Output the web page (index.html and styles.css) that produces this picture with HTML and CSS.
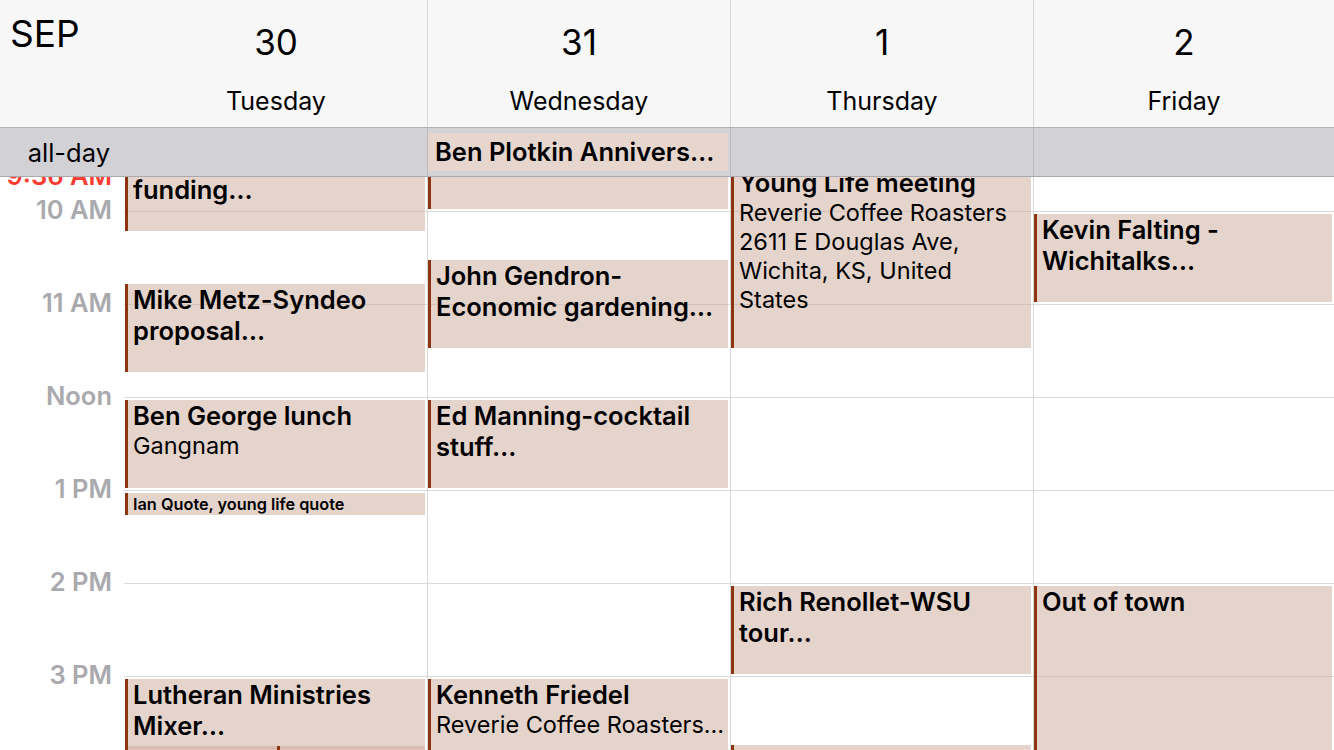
FILE: index.html
```html
<!DOCTYPE html>
<html lang="en">
<head>
  <meta charset="UTF-8">
  <meta name="viewport" content="width=device-width, initial-scale=1.0">
  <title>Calendar - Week</title>
  <link rel="stylesheet" href="styles.css">
</head>
<body>
  <div class="calendar">
    <div class="week-head">
      <div class="month">SEP</div>
      <div class="day-head"><div class="day-num">30</div><div class="day-name">Tuesday</div></div>
      <div class="day-head"><div class="day-num">31</div><div class="day-name">Wednesday</div></div>
      <div class="day-head"><div class="day-num">1</div><div class="day-name">Thursday</div></div>
      <div class="day-head"><div class="day-num">2</div><div class="day-name">Friday</div></div>
    </div>

    <div class="allday-row">
      <div class="allday-label">all-day</div>
      <div class="allday-cell"></div>
      <div class="allday-cell"><div class="allday-event">Ben Plotkin Annivers…</div></div>
      <div class="allday-cell"></div>
      <div class="allday-cell"></div>
    </div>

    <div class="timeline">
      <div class="timeline-inner">
        <div class="hour"><span class="hour-label"></span><span class="hour-line"></span></div>
        <div class="hour"><span class="hour-label">10 AM</span><span class="hour-line"></span></div>
        <div class="hour"><span class="hour-label">11 AM</span><span class="hour-line"></span></div>
        <div class="hour"><span class="hour-label">Noon</span><span class="hour-line"></span></div>
        <div class="hour"><span class="hour-label">1 PM</span><span class="hour-line"></span></div>
        <div class="hour"><span class="hour-label">2 PM</span><span class="hour-line"></span></div>
        <div class="hour"><span class="hour-label">3 PM</span><span class="hour-line"></span></div>
        <div class="hour"><span class="hour-label">4 PM</span><span class="hour-line"></span></div>

        <span class="now-label">9:36 AM</span>

        <div class="days">
          <div class="day-col">
            <div class="event" style="top: 25px; height: 88px;">
              <div class="ev-title">Wichita startup<br>funding…</div>
            </div>
            <div class="event" style="top: 166px; height: 88px;">
              <div class="ev-title">Mike Metz-Syndeo<br>proposal…</div>
            </div>
            <div class="event" style="top: 282px; height: 88px;">
              <div class="ev-title">Ben George lunch</div>
              <div class="ev-sub">Gangnam</div>
            </div>
            <div class="event event-small" style="top: 375px; height: 22px;">
              <div class="ev-title">Ian Quote, young life quote</div>
            </div>
            <div class="event" style="top: 561px; height: 160px;">
              <div class="ev-title">Lutheran Ministries<br>Mixer…</div>
            </div>
            <div class="event event-half" style="top: 628px; height: 90px;"></div>
            <div class="event event-half event-right" style="top: 628px; height: 90px;"></div>
          </div>

          <div class="day-col">
            <div class="event" style="top: 3px; height: 88px;">
              <div class="ev-title">Chamber coffee</div>
            </div>
            <div class="event" style="top: 142px; height: 88px;">
              <div class="ev-title">John Gendron-<br>Economic gardening…</div>
            </div>
            <div class="event" style="top: 282px; height: 88px;">
              <div class="ev-title">Ed Manning-cocktail<br>stuff…</div>
            </div>
            <div class="event" style="top: 561px; height: 160px;">
              <div class="ev-title">Kenneth Friedel</div>
              <div class="ev-sub">Reverie Coffee Roasters…</div>
            </div>
          </div>

          <div class="day-col">
            <div class="event" style="top: 49px; height: 181px;">
              <div class="ev-title">Young Life meeting</div>
              <div class="ev-sub">Reverie Coffee Roasters<br>2611 E Douglas Ave,<br>Wichita, KS, United<br>States</div>
            </div>
            <div class="event" style="top: 468px; height: 88px;">
              <div class="ev-title">Rich Renollet-WSU<br>tour…</div>
            </div>
            <div class="event" style="top: 627px; height: 90px;"></div>
          </div>

          <div class="day-col">
            <div class="event" style="top: 96px; height: 88px;">
              <div class="ev-title">Kevin Falting -<br>Wichitalks…</div>
            </div>
            <div class="event" style="top: 468px; height: 250px;">
              <div class="ev-title">Out of town</div>
            </div>
          </div>
        </div>
      </div>
    </div>
  </div>
</body>
</html>
```

FILE: styles.css
```css
body {
  margin: 0;
  background-color: #fff;
  color: #000;
  font-family: Inter, 'Noto Sans', sans-serif;
  overflow: hidden;
}

.calendar {
  display: flex;
  flex-direction: column;
  height: 100vh;
}

/* week header */
.week-head {
  display: flex;
  height: 127px;
  background-color: #f7f7f7;
  border-bottom: 1px solid #b4b4b4;
}

.month {
  width: 124px;
  padding: 14px 0 0 10px;
  box-sizing: border-box;
  font-size: 37px;
  line-height: 40px;
}

.day-head {
  width: 303px;
  box-sizing: border-box;
  border-left: 1px solid #d8d8d8;
  text-align: center;
}

.month + .day-head {
  border-left-color: transparent;
}

.day-head:last-child {
  flex: 1;
}

.day-num {
  padding-top: 22px;
  font-size: 35px;
  line-height: 40px;
}

.day-name {
  padding-top: 25px;
  font-size: 25px;
  line-height: 28px;
}

/* all-day row */
.allday-row {
  display: flex;
  height: 48px;
  background-color: #d2d1d6;
  border-bottom: 1px solid #a9a9ad;
}

.allday-label {
  width: 124px;
  box-sizing: border-box;
  padding-right: 14px;
  text-align: right;
  font-size: 25.5px;
  line-height: 50px;
}

.allday-cell {
  width: 303px;
  box-sizing: border-box;
  border-left: 1px solid #bcbcc0;
  padding-top: 5px;
}

.allday-cell:nth-child(2) {
  border-left-color: transparent;
}

.allday-cell:last-child {
  flex: 1;
}

.allday-event {
  height: 38px;
  margin-right: 2px;
  padding-left: 7px;
  background-color: #e6d6ce;
  font-size: 25.5px;
  font-weight: 600;
  line-height: 38px;
  white-space: nowrap;
  overflow: hidden;
}

/* timeline */
.timeline {
  flex: 1;
  overflow: hidden;
}

.timeline-inner {
  position: relative;
  margin-top: -59px;
}

.hour {
  display: flex;
  height: 93px;
}

.hour-label {
  width: 124px;
  box-sizing: border-box;
  padding-right: 12px;
  text-align: right;
  color: #a9a9ae;
  font-size: 25.5px;
  font-weight: 600;
  line-height: 28px;
  transform: translateY(-54%);
  align-self: flex-start;
}

.hour-line {
  flex: 1;
  border-top: 1px solid #dadada;
}

.now-label {
  position: absolute;
  top: 44px;
  left: 0;
  width: 112px;
  text-align: right;
  color: #fd3b30;
  font-size: 25.5px;
  font-weight: 600;
  line-height: 28px;
}

.days {
  position: absolute;
  top: 0;
  bottom: 0;
  left: 124px;
  right: 0;
  display: flex;
}

.day-col {
  position: relative;
  width: 303px;
  box-sizing: border-box;
  border-left: 1px solid #d8d8d8;
}

.day-col:first-child {
  border-left-color: transparent;
}

.day-col:last-child {
  flex: 1;
}

.event {
  position: absolute;
  left: 0;
  right: 2px;
  box-sizing: border-box;
  border-left: 3px solid #8d3510;
  padding-left: 5px;
  background-color: rgba(204, 170, 152, 0.5);
  overflow: hidden;
  white-space: nowrap;
}

.ev-title {
  font-size: 25.5px;
  font-weight: 600;
  line-height: 31px;
}

.ev-sub {
  font-size: 23.5px;
  line-height: 29px;
}

.event-small .ev-title {
  font-size: 16.3px;
  line-height: 22px;
}

.event-half {
  right: 150px;
}

.event-right {
  left: 152px;
  right: 2px;
}
```
